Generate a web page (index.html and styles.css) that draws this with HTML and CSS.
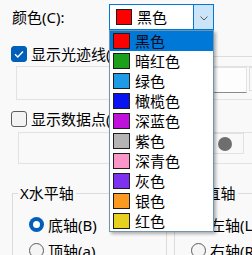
FILE: index.html
```html
<!DOCTYPE html>
<html lang="zh">
<head>
<meta charset="utf-8">
<link rel="stylesheet" href="styles.css">
</head>
<body>
<div class="page">
  <div class="row row-color">
    <span class="label">颜色(C):</span>
    <div class="combo">
      <span class="swatch" style="background:#ff0000"></span>
      <span class="combo-text">黑色</span>
      <span class="combo-btn"><svg width="8" height="5" viewBox="0 0 8 5"><polyline points="0.5,0.5 4,4 7.5,0.5" fill="none" stroke="#5a5a5a" stroke-width="1"/></svg></span>
      <ul class="list">
        <li class="item sel"><span class="swatch sw" style="background:#ff0000"></span>黑色</li>
        <li class="item"><span class="swatch sw" style="background:#1aa01a"></span>暗红色</li>
        <li class="item"><span class="swatch sw" style="background:#1e9be6"></span>绿色</li>
        <li class="item"><span class="swatch sw" style="background:#0a14f0"></span>橄榄色</li>
        <li class="item"><span class="swatch sw" style="background:#c010dc"></span>深蓝色</li>
        <li class="item"><span class="swatch sw" style="background:#b4b4b4"></span>紫色</li>
        <li class="item"><span class="swatch sw" style="background:#fb96c8"></span>深青色</li>
        <li class="item"><span class="swatch sw" style="background:#7d32f0"></span>灰色</li>
        <li class="item"><span class="swatch sw" style="background:#fa9a20"></span>银色</li>
        <li class="item"><span class="swatch sw" style="background:#e6d21e"></span>红色</li>
      </ul>
    </div>
  </div>

  <div class="row check-row r2">
    <span class="cb checked"><svg width="16" height="16" viewBox="0 0 16 16"><polyline points="4,8.3 6.8,11 12,5.5" fill="none" stroke="#fff" stroke-width="1.4"/></svg></span>
    <span class="txt">显示光迹线(T)</span>
    <span class="trail"></span>
  </div>

  <div class="panel p1">
    <div class="tbox"></div>
    <div class="tbox2"></div>
  </div>

  <div class="row check-row r3">
    <span class="cb"></span>
    <span class="txt">显示数据点(P)</span>
  </div>

  <div class="panel p2">
    <div class="mbox"><span class="dot"></span></div>
  </div>

  <div class="groups">
    <fieldset class="grp g1">
      <legend>X水平轴</legend>
      <div class="radios">
        <div class="opt"><span class="rd on"></span><span class="txt">底轴(B)</span></div>
        <div class="opt"><span class="rd"></span><span class="txt">顶轴(a)</span></div>
      </div>
    </fieldset>
    <fieldset class="grp g2">
      <legend>Y垂直轴</legend>
      <div class="radios">
        <div class="opt"><span class="rd on"></span><span class="txt">左轴(L)</span></div>
        <div class="opt"><span class="rd"></span><span class="txt">右轴(R)</span></div>
      </div>
    </fieldset>
  </div>
</div>
</body>
</html>
```

FILE: styles.css
```css
html, body {
  margin: 0;
  padding: 0;
}
body {
  width: 252px;
  height: 255px;
  overflow: hidden;
  background: #f9f9f9;
  font-family: "Noto Sans", "Noto Sans CJK SC", sans-serif;
  font-size: 15px;
  line-height: 20px;
  color: #000;
}
.page {
  padding-top: 4px;
}
.row {
  display: flex;
  align-items: center;
}
.row-color {
  margin-left: 12px;
  height: 26px;
}
.label {
  width: 97px;
  flex: none;
}
.combo {
  position: relative;
  box-sizing: border-box;
  width: 105px;
  height: 26px;
  border: 1px solid #0078d7;
  background: #fff;
  display: flex;
  align-items: center;
  flex: none;
}
.swatch {
  box-sizing: border-box;
  width: 16px;
  height: 16px;
  border: 1px solid #1e1e1e;
  flex: none;
}
.combo > .swatch {
  margin-left: 6px;
}
.combo-text {
  margin-left: 5px;
}
.combo-btn {
  margin-left: auto;
  box-sizing: border-box;
  width: 20px;
  height: 100%;
  background: #cce4f7;
  border-left: 1px solid #0078d7;
  display: flex;
  align-items: center;
  justify-content: center;
  padding-top: 2px;
}
.combo-btn svg {
  display: block;
}
.list {
  position: absolute;
  left: -1px;
  top: 25px;
  width: 105px;
  box-sizing: border-box;
  margin: 0;
  padding: 0;
  list-style: none;
  background: #fff;
  border: 1px solid #6f95b0;
  box-shadow: 2px 2px 3px rgba(0, 0, 0, 0.3);
  z-index: 5;
}
.item {
  height: 20px;
  display: flex;
  align-items: center;
  padding-left: 3px;
  gap: 5px;
}
.item.sel {
  background: #0078d7;
  color: #0a0a20;
}
.sw {
  width: 17px;
  height: 16px;
}
.check-row {
  height: 16px;
  margin-left: 11px;
  gap: 4px;
}
.r2 {
  margin-top: 16px;
  align-items: flex-start;
}
.r2 .txt {
  margin-top: -2px;
}
.trail {
  flex: 1;
  height: 10px;
  border-bottom: 1px solid #dcdcdc;
  margin-left: 4px;
}
.r3 {
  margin-top: 11px;
}
.cb {
  box-sizing: border-box;
  width: 16px;
  height: 16px;
  border-radius: 3px;
  border: 1px solid #5c5c5c;
  background: #f3f3f3;
  flex: none;
}
.cb.checked {
  background: #005fb8;
  border-color: #005fb8;
}
.cb svg {
  display: block;
  margin: -1px;
}
.panel {
  box-sizing: border-box;
  width: 260px;
  border: 1px solid #e2e2e2;
  border-right: none;
  display: flex;
  align-items: flex-start;
}
.p1 {
  margin-left: 16px;
  margin-top: 4px;
  height: 34px;
}
.tbox {
  box-sizing: border-box;
  margin-left: 94px;
  width: 136px;
  height: 26px;
  background: #fdfdfd;
  border: 1px solid #e3e3e3;
  border-bottom: 1px solid #8a8a8a;
}
.tbox2 {
  box-sizing: border-box;
  margin-left: 2px;
  width: 20px;
  height: 24px;
  border: 1px solid #dedede;
}
.p2 {
  margin-left: 18px;
  margin-top: 5px;
  height: 32px;
}
.mbox {
  box-sizing: border-box;
  margin-left: 111px;
  width: 114px;
  height: 21px;
  border: 1px solid #e2e2e2;
  display: flex;
  align-items: center;
  justify-content: flex-end;
}
.dot {
  width: 14px;
  height: 14px;
  border-radius: 50%;
  background: #6e6e6e;
  margin-right: 11px;
}
.groups {
  display: flex;
  gap: 7px;
  margin-left: 12px;
  margin-top: 19px;
}
.grp {
  margin: 0;
  padding: 0;
  border: 1px solid #dcdcdc;
  min-width: 0;
  height: 90px;
  box-sizing: border-box;
}
.g1 {
  width: 155px;
  flex: none;
}
.g2 {
  width: 120px;
  flex: none;
}
legend {
  padding: 0 2px;
  margin-left: 5px;
  line-height: 20px;
}
.radios {
  padding: 14px 0 0 16px;
  display: flex;
  flex-direction: column;
  gap: 11px;
}
.opt {
  display: flex;
  align-items: center;
  height: 15px;
  gap: 4px;
}
.rd {
  box-sizing: border-box;
  width: 15px;
  height: 15px;
  border-radius: 50%;
  border: 1px solid #5c5c5c;
  background: #f5f5f5;
  flex: none;
  display: flex;
  align-items: center;
  justify-content: center;
}
.rd.on {
  border: none;
  background: #005fb8;
}
.rd.on::after {
  content: "";
  width: 7px;
  height: 7px;
  border-radius: 50%;
  background: #fff;
}
```
